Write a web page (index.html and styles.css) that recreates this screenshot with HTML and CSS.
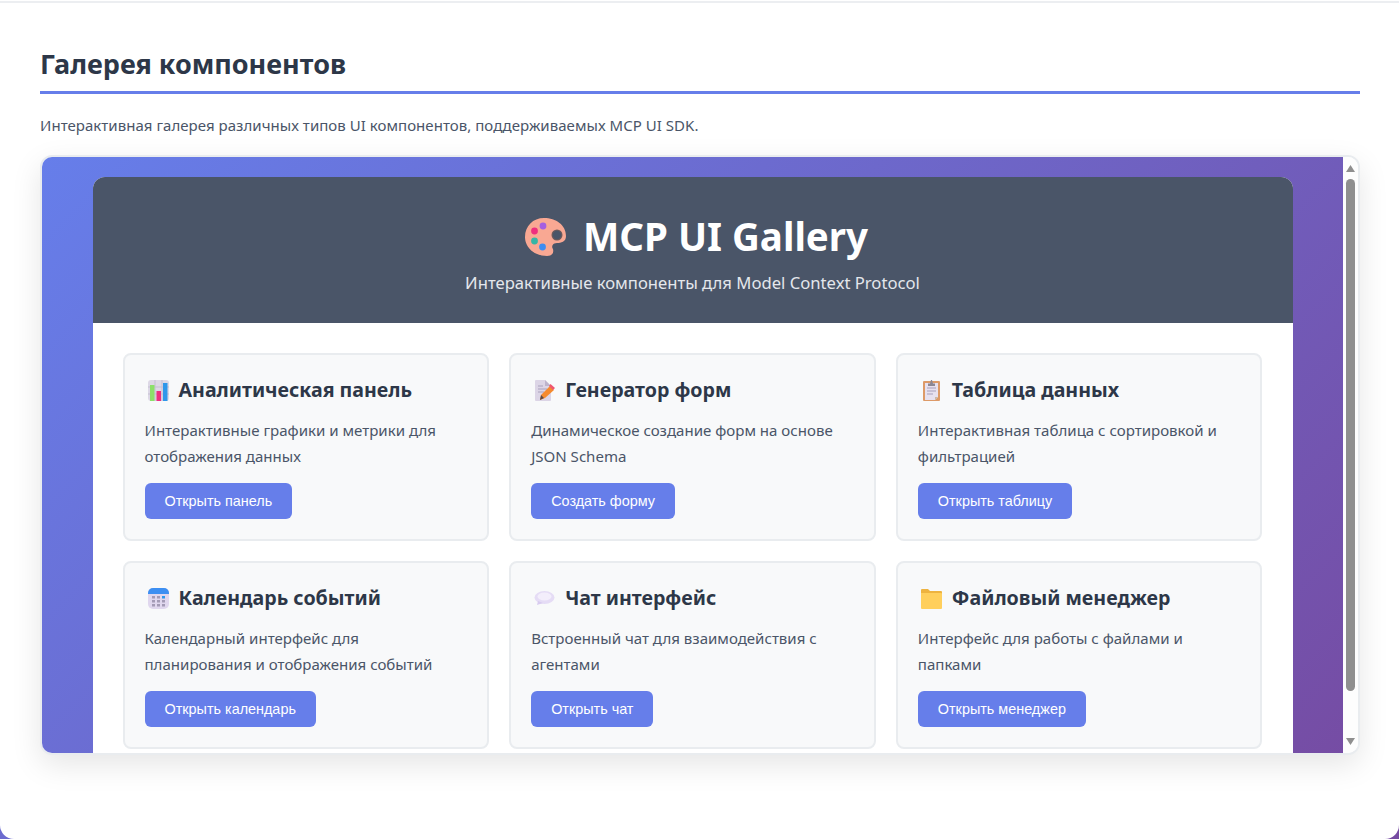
FILE: index.html
```html
<!DOCTYPE html>
<html lang="ru">
<head>
<meta charset="utf-8">
<title>Галерея компонентов</title>
<link rel="stylesheet" href="styles.css">
</head>
<body>
<main class="page">
  <section class="section">
    <h2 class="section-title">Галерея компонентов</h2>
    <p class="section-lead">Интерактивная галерея различных типов UI компонентов, поддерживаемых MCP UI SDK.</p>
    <div class="frame">
      <div class="viewport">
        <div class="doc">
          <div class="app">
            <header class="hero">
              <h1 class="hero-title">
                <svg class="palette" viewBox="0 0 41 38" aria-hidden="true">
                  <path fill="#f9a893" d="M19 0C31 0 41 7 41 18C41 24 36 25 32 25C28 25 26 28 28 31C29 35 27 38 22 38C10 38 0 30 0 19C0 8 8 0 19 0Z"/>
                  <circle cx="32" cy="17" r="5.5" fill="#6b5a5c"/>
                  <circle cx="32" cy="17" r="4.2" fill="#4a5568"/>
                  <circle cx="18" cy="8" r="3.4" fill="#a55fe0"/>
                  <circle cx="9.500" cy="13" r="3.4" fill="#ee2f7f"/>
                  <circle cx="9.500" cy="23" r="3.4" fill="#35b5a5"/>
                  <circle cx="17.500" cy="29" r="3.4" fill="#3f8cf2"/>
                </svg>
                <span>MCP UI Gallery</span>
              </h1>
              <p class="hero-sub">Интерактивные компоненты для Model Context Protocol</p>
            </header>
            <div class="grid">
              <article class="card">
                <h3 class="card-title">
                  <svg class="emoji" viewBox="0 0 21 21" aria-hidden="true">
                    <rect width="21" height="21" rx="3" fill="#ddd8e6"/>
                    <path stroke="#c5bfd2" d="M0 7h21M0 14h21M7 0v21M14 0v21"/>
                    <rect x="2" y="5" width="4.500" height="16" fill="#8ce06a"/>
                    <rect x="8.500" y="11" width="4.500" height="10" fill="#ee2f7f"/>
                    <rect x="15" y="3" width="4.500" height="18" fill="#2f97ea"/>
                  </svg>
                  <span>Аналитическая панель</span>
                </h3>
                <p class="card-text">Интерактивные графики и метрики для отображения данных</p>
                <button class="btn" type="button">Открыть панель</button>
              </article>
              <article class="card">
                <h3 class="card-title">
                  <svg class="emoji" viewBox="0 0 21 21" aria-hidden="true">
                    <path fill="#dcd5e6" d="M1 1a1 1 0 0 1 1-1h9l6 6v14a1 1 0 0 1-1 1H2a1 1 0 0 1-1-1Z"/>
                    <path fill="#bdb4cc" d="M11 0l6 6h-6Z"/>
                    <path stroke="#aaa2bd" d="M4 6h5M4 9h9M4 12h6"/>
                    <path fill="#f58a2e" d="M16 6l4 4-9 8-5 2 1-5Z"/>
                    <path fill="#f0566f" d="M16.500 4l4.500 4-2 2-4-4Z"/>
                    <path fill="#5b4a4a" d="M7 15l3 3-4 2Z"/>
                  </svg>
                  <span>Генератор форм</span>
                </h3>
                <p class="card-text">Динамическое создание форм на основе JSON Schema</p>
                <button class="btn" type="button">Создать форму</button>
              </article>
              <article class="card">
                <h3 class="card-title">
                  <svg class="emoji" viewBox="0 0 21 21" aria-hidden="true">
                    <rect x="2" y="1" width="17" height="20" rx="1" fill="#dd9a68"/>
                    <path fill="#e7e1ef" d="M4 3h13v14l-3 3H4Z"/>
                    <path fill="#c9b9a8" d="M17 17l-3 3v-3Z"/>
                    <path stroke="#a79fbb" d="M6 8h9M6 11h9M6 14h6"/>
                    <path fill="#8b8794" d="M7 6V3.500h2L10 0h1l1 3.500h2V6Z"/>
                  </svg>
                  <span>Таблица данных</span>
                </h3>
                <p class="card-text">Интерактивная таблица с сортировкой и фильтрацией</p>
                <button class="btn" type="button">Открыть таблицу</button>
              </article>
              <article class="card">
                <h3 class="card-title">
                  <svg class="emoji" viewBox="0 0 21 21" aria-hidden="true">
                    <rect width="21" height="21" rx="5" fill="#e0d7ee"/>
                    <path fill="#3d8ff2" d="M0 6V5a5 5 0 0 1 5-5h11a5 5 0 0 1 5 5v1Z"/>
                    <g fill="#a49bb6">
                      <rect x="4" y="8" width="3" height="2.500"/><rect x="9" y="8" width="3" height="2.500"/>
                      <rect x="4" y="12" width="3" height="2.500"/><rect x="9" y="12" width="3" height="2.500"/><rect x="14" y="12" width="3" height="2.500"/>
                      <rect x="4" y="16" width="3" height="2.500"/><rect x="9" y="16" width="3" height="2.500"/><rect x="14" y="16" width="3" height="2.500"/>
                    </g>
                    <rect x="14" y="8" width="3" height="2.500" fill="#2f97ea"/>
                  </svg>
                  <span>Календарь событий</span>
                </h3>
                <p class="card-text">Календарный интерфейс для планирования и отображения событий</p>
                <button class="btn" type="button">Открыть календарь</button>
              </article>
              <article class="card">
                <h3 class="card-title">
                  <svg class="emoji" viewBox="0 0 21 21" aria-hidden="true">
                    <ellipse cx="10.500" cy="9.500" rx="10" ry="6.500" fill="#e5dcf5"/>
                    <ellipse cx="10.500" cy="8.500" rx="7" ry="4" fill="#f3eefb"/>
                    <path fill="#d8cbef" d="M4 13l-1 4 6-2Z"/>
                  </svg>
                  <span>Чат интерфейс</span>
                </h3>
                <p class="card-text">Встроенный чат для взаимодействия с агентами</p>
                <button class="btn" type="button">Открыть чат</button>
              </article>
              <article class="card">
                <h3 class="card-title">
                  <svg class="emoji" viewBox="0 0 21 21" aria-hidden="true">
                    <path fill="#eeb33f" d="M0 2a1 1 0 0 1 1-1h6l2 2h11a1 1 0 0 1 1 1v4H0Z"/>
                    <path fill="#ffcf5c" d="M0 5h20a1 1 0 0 1 1 1v14a1 1 0 0 1-1 1H1a1 1 0 0 1-1-1Z"/>
                  </svg>
                  <span>Файловый менеджер</span>
                </h3>
                <p class="card-text">Интерфейс для работы с файлами и папками</p>
                <button class="btn" type="button">Открыть менеджер</button>
              </article>
            </div>
          </div>
        </div>
      </div>
      <div class="scrollbar" aria-hidden="true">
        <svg class="arrow" viewBox="0 0 9 7"><path d="M4.500 0L9 7H0Z"/></svg>
        <div class="thumb"></div>
        <svg class="arrow" viewBox="0 0 9 7"><path d="M0 0H9L4.500 7Z"/></svg>
      </div>
    </div>
  </section>
</main>
</body>
</html>
```
FILE: styles.css
```css
* { box-sizing: border-box; }
html, body { height: 100%; }
body {
  margin: 0;
  background: linear-gradient(135deg, #667eea 0%, #764ba2 100%);
  font-family: "Noto Sans", "Open Sans", sans-serif;
  overflow: hidden;
}
.page {
  height: 839px;
  background: #fff;
  border-radius: 0 0 14px 14px;
  padding-top: 1px;
}
.section {
  border-top: 2px solid #eceef1;
  padding: 42px 39px 0 40px;
}
.section-title {
  margin: 0;
  height: 49px;
  font-size: 27px;
  line-height: 38px;
  font-weight: 700;
  color: #2d3748;
  border-bottom: 3px solid #667eea;
}
.section-lead {
  margin: 21px 0 20px;
  font-size: 15px;
  letter-spacing: .04px;
  line-height: 20px;
  color: #4a5568;
}
.frame {
  display: flex;
  height: 600px;
  border: 2px solid #e9ecef;
  border-radius: 12px;
  overflow: hidden;
  background: #fff;
  box-shadow: 0 10px 30px rgba(0, 0, 0, .1);
}
.viewport { flex: 1; min-width: 0; overflow: hidden; }
.doc {
  height: 653px;
  padding: 20px 0;
  background: linear-gradient(135deg, #667eea 0%, #764ba2 100%);
}
.app {
  width: 1200px;
  height: 100%;
  margin: 0 auto;
  background: #fff;
  border-radius: 12px;
  overflow: hidden;
}
.hero {
  height: 146px;
  padding-top: 30px;
  background: #4a5568;
  color: #fff;
  text-align: center;
}
.hero-title {
  display: flex;
  justify-content: center;
  align-items: center;
  gap: 17px;
  margin: 0;
  height: 58px;
  padding-left: 8px;
  font-size: 38.5px;
  line-height: 58px;
  font-weight: 700;
}
.palette { width: 41px; height: 38px; margin-top: 2px; }
.hero-sub {
  margin: 5px 0 0;
  font-size: 16.65px;
  line-height: 26px;
  color: #e4e7ec;
}
.grid {
  display: grid;
  grid-template-columns: repeat(3, 1fr);
  gap: 20px;
  padding: 30px;
}
.card {
  height: 188px;
  padding: 20px;
  background: #f8f9fa;
  border: 2px solid #e9ecef;
  border-radius: 8px;
}
.card-title {
  display: flex;
  align-items: center;
  gap: 10px;
  margin: 0 0 12px;
  height: 30px;
  font-size: 19.6px;
  line-height: 30px;
  font-weight: 700;
  color: #2d3748;
}
.emoji { width: 21px; height: 21px; margin-left: 3px; flex: none; }
.card-text {
  margin: 0 0 14px;
  font-size: 15.05px;
  line-height: 26px;
  color: #4a5568;
}
.btn {
  display: block;
  height: 36px;
  padding: 0 20px;
  border: 0;
  border-radius: 6px;
  background: #667eea;
  color: #fff;
  font-family: "Liberation Sans", Arial, sans-serif;
  font-size: 14.4px;
}
.scrollbar {
  flex: none;
  width: 15px;
  display: flex;
  flex-direction: column;
  align-items: center;
  padding: 8px 0;
  background: #fdfdfd;
}
.arrow { width: 9px; height: 7px; flex: none; fill: #8f8f8f; }
.thumb {
  width: 9px;
  height: 512px;
  margin: 7px 0 auto;
  border-radius: 5px;
  background: #8f8f8f;
}
```
